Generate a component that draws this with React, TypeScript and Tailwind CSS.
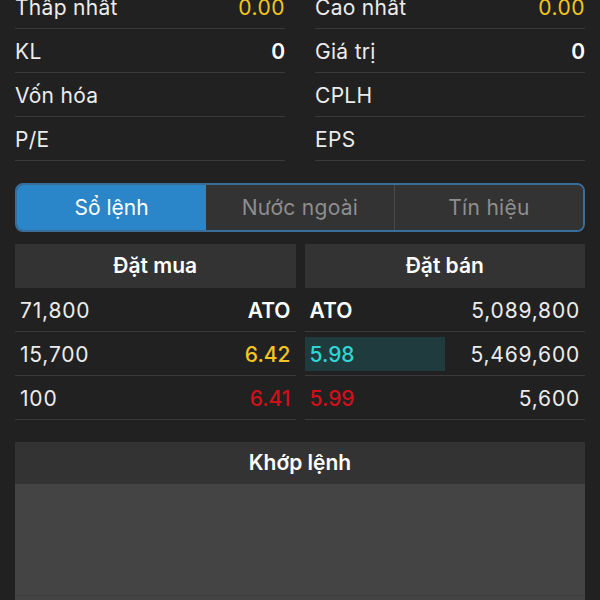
const font = { fontFamily: 'Inter, "Noto Sans", sans-serif' };

const stats = [
  { left: ['Thấp nhất', '0.00', 'text-[#f3c520] tracking-[0.5px]'], right: ['Cao nhất', '0.00', 'text-[#f3c520] tracking-[0.5px]'] },
  { left: ['KL', '0', 'text-white font-semibold'], right: ['Giá trị', '0', 'text-white font-semibold'] },
  { left: ['Vốn hóa', '', ''], right: ['CPLH', '', ''] },
  { left: ['P/E', '', ''], right: ['EPS', '', ''] },
];

const bids = [
  { vol: '71,800', price: 'ATO', color: 'text-white font-semibold' },
  { vol: '15,700', price: '6.42', color: 'text-[#f3c520] font-medium' },
  { vol: '100', price: '6.41', color: 'text-[#d0101b] font-medium' },
];

const asks = [
  { price: 'ATO', vol: '5,089,800', color: 'text-white font-semibold', hl: false },
  { price: '5.98', vol: '5,469,600', color: 'text-[#2fd6d3] font-medium', hl: true },
  { price: '5.99', vol: '5,600', color: 'text-[#d0101b] font-medium', hl: false },
];

function StatCell({ label, value, color }: { label: string; value: string; color: string }) {
  return (
    <div className="flex h-[44px] items-center justify-between border-b border-[#3a3a3a] pt-[3px]">
      <span className="text-[#ececec] tracking-[0.3px]">{label}</span>
      <span className={color}>{value}</span>
    </div>
  );
}

export default function App() {
  return (
    <div className="h-[600px] w-[600px] overflow-hidden bg-[#212121] text-[21px] text-[#ececec]" style={font}>
      <div className="-mt-[15px] grid grid-cols-2 gap-x-[30px] px-[15px]">
        {stats.map((r, i) => (
          <div key={i} className="contents">
            <StatCell label={r.left[0]} value={r.left[1]} color={r.left[2]} />
            <StatCell label={r.right[0]} value={r.right[1]} color={r.right[2]} />
          </div>
        ))}
      </div>

      <div className="mx-[15px] mt-[22px] flex h-[49px] overflow-hidden rounded-[8px] border-2 border-[#3a6e9a]">
        <div className="flex w-[189px] items-center justify-center bg-[#2a86c8] text-white">Sổ lệnh</div>
        <div className="flex flex-1 items-center justify-center border-r border-[#4a4a4a] bg-[#333333] text-[#8e8e8e] tracking-[0.3px]">
          Nước ngoài
        </div>
        <div className="flex flex-1 items-center justify-center bg-[#333333] text-[#8e8e8e] tracking-[0.3px]">Tín hiệu</div>
      </div>

      <div className="mt-[12px] grid grid-cols-2 gap-x-[9px] px-[15px]">
        <div>
          <div className="flex h-[44px] items-center justify-center bg-[#333333] font-semibold text-white">Đặt mua</div>
          {bids.map((b) => (
            <div key={b.vol} className="flex h-[44px] items-center justify-between border-b border-[#3a3a3a] px-[5px] pt-[2px]">
              <span className="tracking-[0.8px]">{b.vol}</span>
              <span className={b.color}>{b.price}</span>
            </div>
          ))}
        </div>
        <div>
          <div className="flex h-[44px] items-center justify-center bg-[#333333] font-semibold text-white">Đặt bán</div>
          {asks.map((a) => (
            <div key={a.vol} className="flex h-[44px] items-center justify-between border-b border-[#3a3a3a] pr-[5px]">
              <span className={`flex h-[34px] w-[140px] items-center pl-[5px] pt-[2px] ${a.hl ? 'bg-[#1f3b3d]' : ''} ${a.color}`}>
                {a.price}
              </span>
              <span className="pt-[2px] tracking-[0.8px]">{a.vol}</span>
            </div>
          ))}
        </div>
      </div>

      <div className="mx-[15px] mt-[22px]">
        <div className="flex h-[42px] items-center justify-center bg-[#333333] font-semibold text-white">Khớp lệnh</div>
        <div className="h-[112px] border-b border-[#3d3d3d] bg-[#444444]" />
        <div className="h-[20px] bg-[#444444]" />
      </div>
    </div>
  );
}
